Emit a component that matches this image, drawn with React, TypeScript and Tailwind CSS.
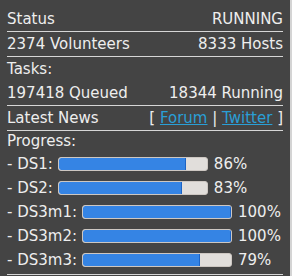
import React from "react";

const bars = [
  { label: "- DS1:", pct: 86 },
  { label: "- DS2:", pct: 83 },
  { label: "- DS3m1:", pct: 100 },
  { label: "- DS3m2:", pct: 100 },
  { label: "- DS3m3:", pct: 79 },
];

function Bar({ pct }: { pct: number }) {
  return (
    <div className="w-[150px] h-[14px] rounded-[3px] bg-[#e1dedb] border border-[#cdc7c2] overflow-hidden">
      <div
        className="h-full bg-[#3584e4] border-r border-[#1c63c4] rounded-l-[2px]"
        style={{ width: `${pct}%` }}
      />
    </div>
  );
}

export default function App() {
  return (
    <div className="w-[292px] h-[276px] bg-[#d4d4d4] overflow-hidden">
      <div
        className="w-[290px] h-[276px] bg-[#444444] text-[#eeeeee] text-[15px] px-[7px] pt-[7px]"
        style={{ fontFamily: '"DejaVu Sans", sans-serif' }}
      >
        <div className="flex justify-between h-[24px] leading-[24px] border-b border-[#d6d6d6] box-content">
          <span>Status</span>
          <span>RUNNING</span>
        </div>
        <div className="flex justify-between h-[24px] leading-[24px] border-b border-[#d6d6d6] box-content">
          <span>2374 Volunteers</span>
          <span>8333 Hosts</span>
        </div>
        <div className="h-[24px] leading-[24px]">Tasks:</div>
        <div className="flex justify-between h-[24px] leading-[24px] border-b border-[#d6d6d6] box-content">
          <span>197418 Queued</span>
          <span>18344 Running</span>
        </div>
        <div className="flex justify-between h-[24px] leading-[24px] border-b border-[#d6d6d6] box-content">
          <span>Latest News</span>
          <span>
            [ <a className="text-[#2a9fd6] underline">Forum</a> |{" "}
            <a className="text-[#2a9fd6] underline">Twitter</a> ]
          </span>
        </div>
        <div className="border-b border-[#d6d6d6] pb-[2px]">
          <div className="h-[21px] leading-[21px]">Progress:</div>
          {bars.map((b) => (
            <div key={b.label} className="flex items-center h-[24px] leading-[24px]">
              <span className="mr-[5px]">{b.label}</span>
              <Bar pct={b.pct} />
              <span className="ml-[6px]">{b.pct}%</span>
            </div>
          ))}
        </div>
      </div>
    </div>
  );
}
